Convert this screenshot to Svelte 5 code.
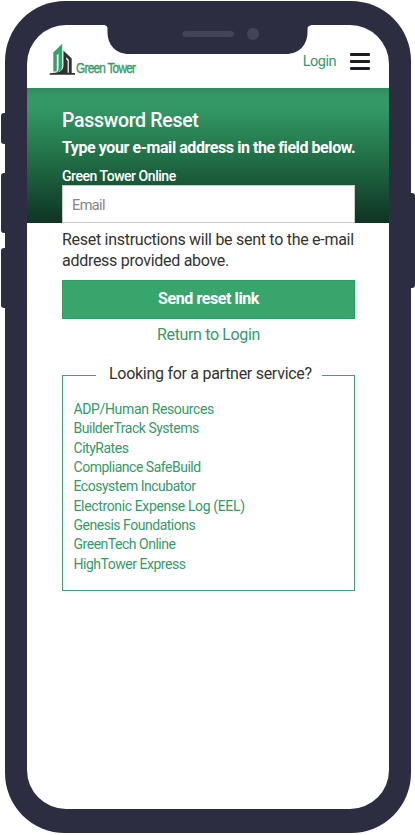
<script>
  const partners = [
    { name: 'ADP/Human Resources', wide: true },
    { name: 'BuilderTrack Systems' },
    { name: 'CityRates' },
    { name: 'Compliance SafeBuild' },
    { name: 'Ecosystem Incubator' },
    { name: 'Electronic Expense Log (EEL)', wide: true },
    { name: 'Genesis Foundations' },
    { name: 'GreenTech Online' },
    { name: 'HighTower Express' }
  ];
</script>

<div class="stage">
  <i class="key mute"></i>
  <i class="key up"></i>
  <i class="key down"></i>
  <i class="key power"></i>
  <main class="phone">
    <div class="screen">
      <header>
        <a class="brand" href="#home" aria-label="Green Tower">
          <svg width="27" height="33" viewBox="0 0 27 33" aria-hidden="true">
            <path fill="#35a06b" d="M4.300 28.500V9.500L13.200 .8V23c0 4-2.500 6.200-6 6.500 1.500-1 2.300-2.200 2.300-4V10.500L7.800 12.200V28.500z" />
            <path fill="#2f3030" d="M14.400 7.500 22.700 15.500v14.500H26V31.800H.7V30.200C9 30.200 13.800 28.500 14.400 23z" />
            <path fill="#fff" d="M17.200 14.200 19.800 16.700V29.800H18.600V17.700L17.200 16.300z" />
          </svg>
          <span>Green Tower</span>
        </a>
        <a class="login" href="#login">Login</a>
        <button class="menu" aria-label="Menu"><i></i><i></i><i></i></button>
      </header>

      <section class="hero">
        <h1>Password Reset</h1>
        <h2>Type your e-mail address in the field below.</h2>
        <label for="email">Green Tower Online</label>
        <input id="email" type="email" placeholder="Email" />
      </section>

      <section class="body">
        <p>Reset instructions will be sent to the e-mail<br />address provided above.</p>
        <button class="send">Send reset link</button>
        <a class="return" href="#login">Return to Login</a>
        <fieldset>
          <legend>Looking for a partner service?</legend>
          <ul>
            {#each partners as { name, wide }}
              <li class:wide><a href="#partner">{name}</a></li>
            {/each}
          </ul>
        </fieldset>
      </section>
    </div>
    <svg class="notch" width="206" height="29" viewBox="0 0 206 29" aria-hidden="true">
      <path fill="#2d2d42" d="M0 0H206V.5Q202.500.500 202.500 4V7C202.500 20 194 29 181 29H24C11 29 2.500 20 2.500 7V4Q2.500.500 0 .500z" />
      <rect x="77.500" y="6" width="51.500" height="6" rx="3" fill="#43435a" />
      <circle cx="148" cy="9" r="6" fill="#43435a" />
    </svg>
  </main>
</div>

<style>
  :global(body) { background: #fff; }
  .stage {
    position: relative;
    box-sizing: border-box;
    width: 415px;
    height: 835px;
    padding: 1px 4px 1px 5px;
    overflow: hidden;
    font-family: Roboto, "Liberation Sans", sans-serif;
    color: #333;
  }
  .stage * { box-sizing: border-box; }
  a { color: #36996a; text-decoration: none; }
  .key { position: absolute; width: 8px; border-radius: 3px; background: #2d2d42; }
  .mute { left: 1px; top: 113px; height: 31px; }
  .up { left: 1px; top: 173px; height: 60px; }
  .down { left: 1px; top: 248px; height: 60px; }
  .power { right: 0; top: 193px; height: 95px; }
  .phone {
    position: relative;
    width: 406px;
    height: 832px;
    padding: 24px 22px 24px;
    border-radius: 60px;
    background: #2d2d42;
  }
  .notch { position: absolute; left: 100px; top: 24px; display: block; margin-top: -.5px; }
  .screen { height: 784px; border-radius: 39px; background: #fff; overflow: hidden; }
  header { display: flex; height: 63px; padding: 18px 19px 0 22px; align-items: flex-start; }
  .brand { display: flex; width: 100px; height: 33px; }
  .brand svg { flex: none; }
  .brand span {
    margin-top: 16px;
    font: 15.500px/17px "Liberation Sans", sans-serif;
    letter-spacing: -1px;
    white-space: nowrap;
    transform: scaleX(.765);
    transform-origin: 0 0;
    -webkit-text-stroke: .4px #36996a;
  }
  .login { margin: 10px 0 0 auto; font-size: 14.500px; line-height: 18px; letter-spacing: -.5px; }
  .menu {
    display: flex;
    flex-direction: column;
    justify-content: space-between;
    width: 20px;
    height: 17px;
    margin: 10px 0 0 14px;
    padding: 0;
    border: 0;
    background: none;
  }
  .menu i { height: 3px; border-radius: 1px; background: #1c1c24; }
  .hero {
    height: 135px;
    padding: 20px 34px 0 35px;
    background: linear-gradient(#2f8b5b 0, #339865 8px, #339865 20px, #23764b 62px, #0f3323 100%);
    color: #fff;
  }
  h1, h2 { margin: 0; white-space: nowrap; }
  h1 { font-size: 19.500px; line-height: 26px; font-weight: 500; letter-spacing: -.3px; }
  h2 { margin-top: 3px; font-size: 16px; line-height: 22px; font-weight: 700; letter-spacing: -.43px; }
  label { display: block; margin-top: 7px; font-size: 14px; line-height: 20px; font-weight: 500; letter-spacing: -.46px; }
  input {
    display: block;
    width: 293px;
    height: 38px;
    margin-top: -1px;
    padding: 3px 9px 0;
    border: 1px solid #c8cfcb;
    border-radius: 0;
    background: #fff;
    font: 14.500px Roboto, sans-serif;
    letter-spacing: -.6px;
  }
  input::placeholder { color: #858585; }
  .body { padding: 6px 34px 0 35px; }
  p { margin: 0 0 9px; font-size: 16px; line-height: 21px; letter-spacing: -.28px; white-space: nowrap; }
  .send {
    display: block;
    width: 293px;
    height: 39px;
    padding: 0 0 2px;
    border: 1px solid #309a63;
    background: #38a56d;
    color: #fff;
    font: 700 16px Roboto, sans-serif;
    letter-spacing: -.4px;
  }
  .return { display: block; margin-top: 6px; font-size: 16px; line-height: 20px; letter-spacing: -.36px; text-align: center; }
  fieldset {
    width: 293px;
    height: 228px;
    min-width: 0;
    margin: 18px 0 0;
    padding: 13px 0 0 33px;
    border: 1px solid #479b77;
  }
  legend {
    width: 226px;
    padding: 1px 0 3px 13px;
    font-size: 16px;
    line-height: 20px;
    letter-spacing: -.28px;
    white-space: nowrap;
  }
  ul { margin: 0 0 0 -22.500px; padding: 0; list-style: none; }
  li { height: 19.35px; font-size: 14px; line-height: 19.35px; letter-spacing: -.48px; white-space: nowrap; }
  .wide { letter-spacing: -.36px; }
</style>
